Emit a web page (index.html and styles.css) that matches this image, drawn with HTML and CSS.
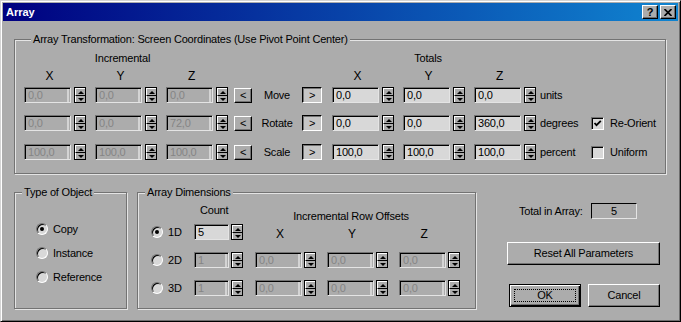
FILE: index.html
```html
<!DOCTYPE html>
<html lang="en">
  <head>
    <meta charset="UTF-8" />
    <title>Array</title>
    <link rel="stylesheet" href="styles.css">
  </head>
  <body>
    <div class="window">
      <div class="titlebar">
        <span class="title">Array</span>
        <div class="caption-btns">
          <span class="cap-btn help">?</span>
          <span class="cap-btn">
            <svg width="8" height="7" viewBox="0 0 8 7"><path d="M0.5 0 L7.5 7 M7.5 0 L0.5 7" stroke="#000" stroke-width="1.7" fill="none"/></svg>
          </span>
        </div>
      </div>

      <div class="content">
        <fieldset class="group transform">
          <legend>Array Transformation: Screen Coordinates (Use Pivot Point Center)</legend>

          <div class="thead">
            <span class="inc-title">Incremental</span>
            <span class="tot-title">Totals</span>
          </div>

          <div class="taxis">
            <span class="axis">X</span>
            <span class="axis">Y</span>
            <span class="axis">Z</span>
            <span class="axis tot-first">X</span>
            <span class="axis">Y</span>
            <span class="axis">Z</span>
          </div>

          <div class="trow">
            <span class="num"><span class="fld off">0,0</span><span class="spin"><i class="up"></i><i class="dn"></i></span></span>
            <span class="num"><span class="fld off">0,0</span><span class="spin"><i class="up"></i><i class="dn"></i></span></span>
            <span class="num"><span class="fld off">0,0</span><span class="spin"><i class="up"></i><i class="dn"></i></span></span>
            <span class="arrow-btn left">&lt;</span>
            <span class="op">Move</span>
            <span class="arrow-btn right">&gt;</span>
            <span class="num tot-first"><span class="fld">0,0</span><span class="spin"><i class="up"></i><i class="dn"></i></span></span>
            <span class="num"><span class="fld">0,0</span><span class="spin"><i class="up"></i><i class="dn"></i></span></span>
            <span class="num"><span class="fld">0,0</span><span class="spin"><i class="up"></i><i class="dn"></i></span></span>
            <span class="unit">units</span>
          </div>

          <div class="trow">
            <span class="num"><span class="fld off">0,0</span><span class="spin"><i class="up"></i><i class="dn"></i></span></span>
            <span class="num"><span class="fld off">0,0</span><span class="spin"><i class="up"></i><i class="dn"></i></span></span>
            <span class="num"><span class="fld off">72,0</span><span class="spin"><i class="up"></i><i class="dn"></i></span></span>
            <span class="arrow-btn left">&lt;</span>
            <span class="op">Rotate</span>
            <span class="arrow-btn right">&gt;</span>
            <span class="num tot-first"><span class="fld">0,0</span><span class="spin"><i class="up"></i><i class="dn"></i></span></span>
            <span class="num"><span class="fld">0,0</span><span class="spin"><i class="up"></i><i class="dn"></i></span></span>
            <span class="num"><span class="fld">360,0</span><span class="spin"><i class="up"></i><i class="dn"></i></span></span>
            <span class="unit">degrees</span>
            <span class="check on"><svg width="9" height="9" viewBox="0 0 9 9"><path d="M1.5 4 L3.5 6.2 L7.8 1.8" stroke="#000" stroke-width="1.8" fill="none"/></svg></span>
            <span class="check-label">Re-Orient</span>
          </div>

          <div class="trow">
            <span class="num"><span class="fld off">100,0</span><span class="spin"><i class="up"></i><i class="dn"></i></span></span>
            <span class="num"><span class="fld off">100,0</span><span class="spin"><i class="up"></i><i class="dn"></i></span></span>
            <span class="num"><span class="fld off">100,0</span><span class="spin"><i class="up"></i><i class="dn"></i></span></span>
            <span class="arrow-btn left">&lt;</span>
            <span class="op">Scale</span>
            <span class="arrow-btn right">&gt;</span>
            <span class="num tot-first"><span class="fld">100,0</span><span class="spin"><i class="up"></i><i class="dn"></i></span></span>
            <span class="num"><span class="fld">100,0</span><span class="spin"><i class="up"></i><i class="dn"></i></span></span>
            <span class="num"><span class="fld">100,0</span><span class="spin"><i class="up"></i><i class="dn"></i></span></span>
            <span class="unit">percent</span>
            <span class="check"></span>
            <span class="check-label">Uniform</span>
          </div>
        </fieldset>

        <div class="bottom">
          <fieldset class="group type-group">
            <legend>Type of Object</legend>
            <div class="radios">
              <label class="radio-row"><span class="radio on"></span>Copy</label>
              <label class="radio-row"><span class="radio"></span>Instance</label>
              <label class="radio-row"><span class="radio"></span>Reference</label>
            </div>
          </fieldset>

          <fieldset class="group dims">
            <legend>Array Dimensions</legend>
            <div class="dhead">
              <span class="count-title">Count</span>
              <span class="iro-title">Incremental Row Offsets</span>
            </div>
            <div class="dgrid">
              <label class="radio-row"><span class="radio on"></span>1D</label>
              <span class="num"><span class="fld count">5</span><span class="spin"><i class="up"></i><i class="dn"></i></span></span>
              <span class="axis">X</span>
              <span class="axis">Y</span>
              <span class="axis">Z</span>

              <label class="radio-row"><span class="radio"></span>2D</label>
              <span class="num"><span class="fld count off">1</span><span class="spin"><i class="up"></i><i class="dn"></i></span></span>
              <span class="num"><span class="fld off">0,0</span><span class="spin"><i class="up"></i><i class="dn"></i></span></span>
              <span class="num"><span class="fld off">0,0</span><span class="spin"><i class="up"></i><i class="dn"></i></span></span>
              <span class="num"><span class="fld off">0,0</span><span class="spin"><i class="up"></i><i class="dn"></i></span></span>

              <label class="radio-row"><span class="radio"></span>3D</label>
              <span class="num"><span class="fld count off">1</span><span class="spin"><i class="up"></i><i class="dn"></i></span></span>
              <span class="num"><span class="fld off">0,0</span><span class="spin"><i class="up"></i><i class="dn"></i></span></span>
              <span class="num"><span class="fld off">0,0</span><span class="spin"><i class="up"></i><i class="dn"></i></span></span>
              <span class="num"><span class="fld off">0,0</span><span class="spin"><i class="up"></i><i class="dn"></i></span></span>
            </div>
          </fieldset>

          <div class="side">
            <div class="total-row">
              <span class="total-label">Total in Array:</span>
              <span class="total-box">5</span>
            </div>
            <button class="btn reset">Reset All Parameters</button>
            <div class="ok-row">
              <button class="btn ok"><span class="focus">OK</span></button>
              <button class="btn">Cancel</button>
            </div>
          </div>
        </div>
      </div>
    </div>
  </body>
</html>
```

FILE: styles.css
```css
body {
  margin: 0;
  background-color: #acacac;
  font-family: "Liberation Sans Narrow", "Arial Narrow", "Liberation Sans", sans-serif;
  font-size: 11px;
  letter-spacing: -0.2px;
  line-height: 15px;
  color: #000;
  white-space: nowrap;
}
.window {
  width: 681px;
  height: 322px;
  box-sizing: border-box;
  padding: 2px;
  background-color: #acacac;
  border: 1px solid;
  border-color: #d4d4d4 #000 #000 #d4d4d4;
  box-shadow: inset 1px 1px #fff, inset -1px -1px #6e6e6e;
}
.titlebar {
  height: 18px;
  display: flex;
  align-items: center;
  justify-content: space-between;
  padding: 0 2px 0 3px;
  background: linear-gradient(90deg, #000080, #1084d0);
}
.title {
  color: #fff;
  font-family: "Liberation Sans", sans-serif;
  font-weight: bold;
  font-size: 11px;
  letter-spacing: 0;
}
.caption-btns {
  display: flex;
  gap: 2px;
}
.cap-btn {
  width: 16px;
  height: 14px;
  box-sizing: border-box;
  display: flex;
  align-items: center;
  justify-content: center;
  background-color: #acacac;
  border: 1px solid;
  border-color: #fff #000 #000 #fff;
  box-shadow: inset -1px -1px #6e6e6e;
  font-family: "Liberation Sans", sans-serif;
  font-weight: bold;
  font-size: 11px;
  letter-spacing: 0;
}

.content {
  padding: 11px 0 0 11px;
}

/* etched group boxes */
.group {
  margin: 0;
  padding: 0;
  min-width: 0;
  border: 1px solid #737373;
  box-shadow: inset 1px 1px #e4e4e4, 1px 1px #e4e4e4;
}
.group legend {
  margin-left: 7px;
  padding: 0 2px;
  line-height: 15px;
  background-color: #acacac;
}
.transform {
  width: 652px;
  box-sizing: border-box;
  padding: 2px 0 13px 9px;
}

/* numeric field + spinner */
.num {
  display: flex;
  align-items: center;
  gap: 3px;
  width: 62px;
}
.fld {
  width: 47px;
  height: 16px;
  box-sizing: border-box;
  padding-left: 3px;
  line-height: 14px;
  background-color: #d8d8d8;
  border: 1px solid;
  border-color: #737373 #e4e4e4 #e4e4e4 #737373;
  box-shadow: inset 1px 1px #000;
  overflow: hidden;
}
.fld.off {
  background-color: #acacac;
  color: #858585;
  box-shadow: inset 1px 1px #000, inset -1px 0 #acacac, inset -3px 0 #d4d4d4;
}
.fld.count {
  width: 35px;
}
.spin {
  width: 12px;
  height: 16px;
  box-sizing: border-box;
  display: flex;
  flex-direction: column;
  border: 1px solid #000;
  background-color: #acacac;
}
.spin i {
  flex: 1;
  display: flex;
  align-items: center;
  justify-content: center;
  border-top: 1px solid #fff;
  border-left: 1px solid #fff;
}
.spin i.dn {
  border-top: 1px solid #000;
}
.spin i::after {
  content: "";
  border-left: 3px solid transparent;
  border-right: 3px solid transparent;
}
.spin i.up::after {
  border-bottom: 3px solid #000;
}
.spin i.dn::after {
  border-top: 3px solid #000;
}

/* transform rows */
.thead {
  display: flex;
  margin-top: 2px;
}
.inc-title {
  width: 197px;
  text-align: center;
}
.tot-title {
  width: 192px;
  margin-left: 111px;
  text-align: center;
}
.taxis {
  display: flex;
  margin-top: 3px;
}
.axis {
  width: 62px;
  box-sizing: border-box;
  padding-right: 11px;
  text-align: center;
  font-size: 12px;
}
.taxis .axis + .axis {
  margin-left: 9px;
}
.taxis .axis.tot-first {
  margin-left: 104px;
}
.trow {
  display: flex;
  align-items: center;
  height: 16px;
  margin-top: 12px;
}
.taxis + .trow {
  margin-top: 3px;
}
.trow:last-child {
  margin-top: 13px;
}
.trow .num + .num {
  margin-left: 9px;
}
.trow .num.tot-first {
  margin-left: 10px;
}
.arrow-btn {
  height: 15px;
  box-sizing: border-box;
  display: flex;
  align-items: center;
  justify-content: center;
  line-height: 13px;
}
.arrow-btn.left {
  width: 18px;
  margin-left: 6px;
  border: 1px solid;
  border-color: #fff #000 #000 #fff;
  box-shadow: inset -1px -1px #737373;
}
.arrow-btn.right {
  width: 20px;
  height: 16px;
  background-color: #c6c6c6;
  border: 1px solid;
  border-color: #000 #fff #fff #000;
  box-shadow: inset 1px 1px #737373;
}
.op {
  width: 50px;
  text-align: center;
}
.unit {
  width: 51px;
  margin-left: 4px;
}
.check {
  width: 13px;
  height: 13px;
  box-sizing: border-box;
  display: flex;
  align-items: center;
  justify-content: center;
  background-color: #d8d8d8;
  border: 1px solid;
  border-color: #737373 #fff #fff #737373;
  box-shadow: inset 1px 1px #000;
}
.check-label {
  margin-left: 6px;
}

/* lower part */
.bottom {
  display: flex;
  align-items: flex-start;
  margin-top: 11px;
}
.type-group {
  width: 113px;
  height: 124px;
  box-sizing: border-box;
}
.radios {
  display: flex;
  flex-direction: column;
  gap: 8px;
  padding: 21px 0 0 21px;
}
.radio-row {
  display: flex;
  align-items: center;
  gap: 5px;
  height: 16px;
}
.radio {
  width: 12px;
  height: 12px;
  box-sizing: border-box;
  display: flex;
  align-items: center;
  justify-content: center;
  border-radius: 50%;
  background-color: #d8d8d8;
  border: 1px solid;
  border-color: #737373 #fff #fff #737373;
  box-shadow: inset 1px 1px #000;
}
.radio.on::after {
  content: "";
  width: 4px;
  height: 4px;
  border-radius: 50%;
  background-color: #000;
}
.dims {
  width: 339px;
  height: 124px;
  box-sizing: border-box;
  margin-left: 10px;
}
.dhead {
  display: flex;
  height: 21px;
  margin-top: 3px;
  padding-left: 56px;
}
.count-title {
  width: 51px;
  padding-left: 6px;
  box-sizing: border-box;
}
.iro-title {
  width: 206px;
  margin-left: 10px;
  align-self: flex-end;
  padding-right: 14px;
  box-sizing: border-box;
  text-align: center;
}
.dgrid {
  display: grid;
  grid-template-columns: 33px 51px 62px 62px 62px;
  grid-template-rows: 16px 16px 16px;
  column-gap: 10px;
  row-gap: 12px;
  align-items: center;
  padding-left: 13px;
}
.dgrid .axis {
  align-self: start;
  margin-top: 3px;
  padding-right: 12px;
}
.dgrid .num {
  gap: 2px;
}
.side {
  width: 153px;
  margin-left: 31px;
  display: flex;
  flex-direction: column;
}
.total-row {
  display: flex;
  align-items: center;
  height: 16px;
  margin-top: 18px;
  padding-left: 12px;
}
.total-label {
  width: 72px;
}
.total-box {
  width: 46px;
  height: 16px;
  box-sizing: border-box;
  text-align: center;
  line-height: 14px;
  border: 1px solid;
  border-color: #000 #e4e4e4 #e4e4e4 #000;
}
.btn {
  height: 23px;
  padding: 0;
  font: inherit;
  letter-spacing: inherit;
  color: #000;
  background-color: #acacac;
  border: 1px solid;
  border-color: #fff #000 #000 #fff;
  box-shadow: inset -1px -1px #737373;
}
.btn.reset {
  margin-top: 23px;
}
.ok-row {
  display: flex;
  gap: 7px;
  margin-top: 19px;
  padding-left: 2px;
}
.ok-row .btn {
  width: 72px;
}
.btn.ok {
  border: 1px solid #000;
  box-shadow: inset 1px 1px #fff, inset -1px -1px #000, inset -2px -2px #737373;
  padding: 4px;
  display: flex;
}
.focus {
  flex: 1;
  display: flex;
  align-items: center;
  justify-content: center;
  border: 1px dotted #000;
}
```
